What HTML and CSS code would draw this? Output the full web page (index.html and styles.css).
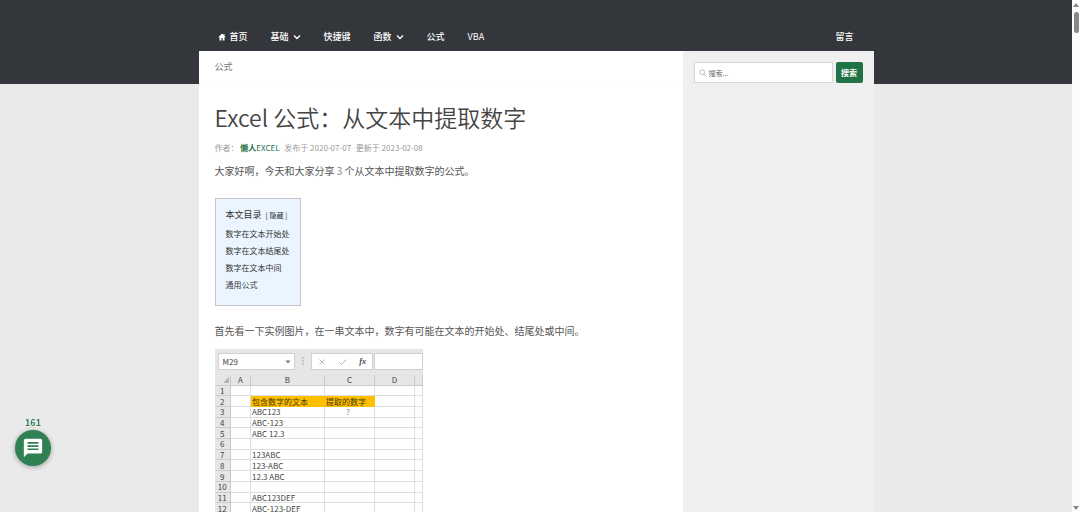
FILE: index.html
```html
<!DOCTYPE html>
<html lang="zh-CN">
<head>
<meta charset="utf-8">
<title>Excel 公式：从文本中提取数字</title>
<link rel="stylesheet" href="styles.css">
</head>
<body>
<div class="page">
  <div class="container">
    <nav class="nav">
      <a href="#"><svg class="home" viewBox="0 0 16 16"><path d="M8 1 0.5 8.500H3V15h3.800V10h2.400v5H13V8.500h2.500L13 6V2h-2v2z" fill="currentColor"/></svg>首页</a>
      <a href="#">基础<svg class="chev" viewBox="0 0 8 8"><path d="M1 2.500 4 5.500 7 2.500" fill="none" stroke="currentColor" stroke-width="1.400"/></svg></a>
      <a href="#">快捷键</a>
      <a href="#">函数<svg class="chev" viewBox="0 0 8 8"><path d="M1 2.500 4 5.500 7 2.500" fill="none" stroke="currentColor" stroke-width="1.400"/></svg></a>
      <a href="#">公式</a>
      <a href="#" class="latin">VBA</a>
      <a href="#" class="last">留言</a>
    </nav>
    <div class="columns">
      <main class="main">
        <div class="crumb">公式</div>
        <article class="post">
          <h1>Excel 公式：从文本中提取数字</h1>
          <p class="meta">作者： <a href="#"><b>懒人</b>EXCEL</a><span class="dot">·</span>发布于 2020-07-07<span class="dot">·</span>更新于 2023-02-08</p>
          <p class="text">大家好啊，今天和大家分享 <span class="num">3</span> 个从文本中提取数字的公式。</p>
          <div class="toc">
            <div class="toc-title">本文目录 <span>[ <a href="#">隐藏</a> ]</span></div>
            <ul>
              <li><a href="#">数字在文本开始处</a></li>
              <li><a href="#">数字在文本结尾处</a></li>
              <li><a href="#">数字在文本中间</a></li>
              <li><a href="#">通用公式</a></li>
            </ul>
          </div>
          <p class="text">首先看一下实例图片，在一串文本中，数字有可能在文本的开始处、结尾处或中间。</p>
          <div class="sheet">
            <div class="bar">
              <div class="cellname">M29<svg viewBox="0 0 6 4"><path d="M0.500 0.500h5L3 3.500z" fill="#777"/></svg></div>
              <svg class="grip" viewBox="0 0 4 10"><path d="M2 1v2M2 4v2M2 7v2" stroke="#aaa"/></svg>
              <div class="tools">
                <svg viewBox="0 0 10 10"><path d="M2.500 2.500l5 5M7.500 2.500l-5 5" stroke="#b5b5b5" fill="none"/></svg>
                <svg viewBox="0 0 10 10"><path d="M1.500 5.500l2 2 5-5" stroke="#b5b5b5" fill="none"/></svg>
                <span class="fx">fx</span>
              </div>
              <div class="formula"></div>
            </div>
            <table>
              <colgroup><col class="c0"><col class="ca"><col class="cb"><col class="cc"><col class="cd"><col class="ce"></colgroup>
              <tr class="head"><th><svg class="corner" viewBox="0 0 8 8"><path d="M7 1v6H1z" fill="#b4b4b4"/></svg></th><th>A</th><th>B</th><th>C</th><th>D</th><th></th></tr>
              <tr><th>1</th><td></td><td></td><td></td><td></td><td></td></tr>
              <tr><th>2</th><td></td><td class="hl">包含数字的文本</td><td class="hl">提取的数字</td><td></td><td></td></tr>
              <tr><th>3</th><td></td><td>ABC123</td><td class="q">?</td><td></td><td></td></tr>
              <tr><th>4</th><td></td><td>ABC-123</td><td></td><td></td><td></td></tr>
              <tr><th>5</th><td></td><td>ABC 12.3</td><td></td><td></td><td></td></tr>
              <tr><th>6</th><td></td><td></td><td></td><td></td><td></td></tr>
              <tr><th>7</th><td></td><td>123ABC</td><td></td><td></td><td></td></tr>
              <tr><th>8</th><td></td><td>123-ABC</td><td></td><td></td><td></td></tr>
              <tr><th>9</th><td></td><td>12.3 ABC</td><td></td><td></td><td></td></tr>
              <tr><th>10</th><td></td><td></td><td></td><td></td><td></td></tr>
              <tr><th>11</th><td></td><td>ABC123DEF</td><td></td><td></td><td></td></tr>
              <tr><th>12</th><td></td><td>ABC-123-DEF</td><td></td><td></td><td></td></tr>
            </table>
          </div>
        </article>
      </main>
      <aside class="side">
        <form class="search">
          <label class="field" for="q"><svg viewBox="0 0 10 10"><circle cx="4" cy="4" r="3" fill="none" stroke="#aaa"/><path d="M6.200 6.200 9.200 9.200" stroke="#aaa"/></svg>
          <input id="q" type="text" placeholder="搜索..." aria-label="搜索"></label>
          <button type="button">搜索</button>
        </form>
      </aside>
    </div>
  </div>
</div>
<div class="scrollbar"><svg viewBox="0 0 8 6"><path d="M4 1 7 5H1z" fill="#858585"/></svg><span class="thumb"></span><svg class="down" viewBox="0 0 8 6"><path d="M4 5 7 1H1z" fill="#858585"/></svg></div>
<div class="comments">
  <span>161</span>
  <button type="button" aria-label="评论"><svg viewBox="0 0 24 24"><path fill="#fff" fill-rule="evenodd" d="M4 2h16a2 2 0 0 1 2 2v12a2 2 0 0 1-2 2H6l-4 4V4a2 2 0 0 1 2-2zM6 5.500v1.800h12V5.500zM6 9v1.800h12V9zM6 12.500v1.800h12v-1.800z"/></svg></button>
</div>
</body>
</html>
```
FILE: styles.css
```css
* { box-sizing: border-box; }
body {
  margin: 0;
  height: 100vh;
  display: flex;
  overflow: hidden;
  background: #eaeaea;
  color: #555;
  font-family: "Noto Sans CJK SC", sans-serif;
  font-size: 10px;
}
a { color: inherit; text-decoration: none; }
h1, p, ul { margin: 0; padding: 0; }
button { border: 0; padding: 0; font-family: inherit; cursor: pointer; }

.page {
  flex: 1;
  background: linear-gradient(#33363b 84px, #eaeaea 84px);
}
.container { max-width: 675px; margin: 0 auto; padding-top: 22px; }

.nav {
  display: flex;
  align-items: center;
  gap: 23px;
  height: 29px;
  padding: 0 20px 0 19px;
  color: #fff;
  font-size: 9px;
  font-weight: 500;
}
.nav a { display: flex; align-items: center; }
.nav .last { margin-left: auto; }
.nav .latin { font-weight: 400; }
.home { width: 8px; height: 8px; margin-right: 4px; }
.chev { width: 8px; height: 8px; margin-left: 4px; }

.columns { display: flex; align-items: stretch; }
.main { flex: 1; min-width: 0; background: #fff; }
.side { width: 191px; padding: 11px; background: #f0f0f0; }
.crumb {
  height: 34px;
  padding: 0 16px;
  line-height: 32px;
  border-bottom: 1px solid #fafafa;
  font-size: 9px;
  color: #777;
}
.post { padding: 14px 16px 0; }
h1 { font-size: 23px; font-weight: 350; line-height: 36px; color: #444; }
.meta { margin-top: 5px; font-size: 8px; line-height: 16px; color: #999; }
.meta a { color: #217346; }
.meta b { font-weight: 700; }
.dot { margin: 0 1px; color: #ccc; font-family: "Liberation Sans", sans-serif; }
.text { margin-top: 4px; line-height: 20px; }
.num { color: #888; }

.toc {
  width: max-content;
  margin: 17px 0 15px;
  padding: 6px 10px 12px;
  border: 1px solid #c2c6cb;
  background: #ebf5ff;
  color: #333;
}
.toc-title { font-size: 9px; line-height: 19px; }
.toc-title span { font-size: 7px; margin-left: 2px; }
.toc ul { list-style: none; font-size: 8px; line-height: 17px; }

.sheet { width: 208px; margin-top: 8px; background: #e6e6e6; overflow: hidden; color: #444; }
.bar { display: flex; height: 26px; padding: 4px 0 5px 3px; }
.bar > div { background: #fff; border: 1px solid #d0d0d0; }
.cellname {
  width: 77px;
  display: flex;
  align-items: center;
  justify-content: space-between;
  padding: 0 3px 0 4px;
  font-size: 8px;
}
.cellname svg { width: 6px; height: 4px; }
.grip { width: 4px; height: 10px; margin: 3px 6px; }
.tools { width: 62px; display: flex; align-items: center; justify-content: space-around; }
.tools svg { width: 10px; height: 10px; }
.fx { font: italic bold 8px "Liberation Serif", serif; }
.formula { flex: 1; margin-left: 1px; }

.sheet table { width: 208px; height: 139px; table-layout: fixed; border-collapse: collapse; background: #fff; }
.c0 { width: 16px; }
.ca { width: 20px; }
.cb { width: 74px; }
.cc { width: 50px; }
.cd { width: 40px; }
.sheet th, .sheet td {
  padding: 0 0 0 1px;
  border-right: 1px solid #dedede;
  border-bottom: 1px solid #dedede;
  font-size: 8px;
  line-height: 9px;
  font-weight: 400;
  white-space: nowrap;
}
.sheet th { padding: 0; background: #e6e6e6; border-color: #cacaca; text-align: center; }
.sheet .hl { background: #ffc000; border-color: #ffc000; color: #44380c; }
.sheet .q { text-align: center; padding-right: 4px; color: #888; }
.corner { display: block; width: 8px; height: 8px; margin-left: auto; }

.search { display: flex; gap: 3px; height: 21px; }
.field {
  flex: 1;
  min-width: 0;
  display: flex;
  align-items: center;
  gap: 2px;
  padding: 0 4px;
  background: #fff;
  border: 1px solid #d8d8d8;
}
.field svg { width: 8px; height: 8px; flex: none; }
.field input { width: 100%; border: 0; padding: 0; outline: 0; background: none; font: 7px "Noto Sans CJK SC", sans-serif; }
.field input::placeholder { color: #666; }
.search button { width: 27px; border-radius: 2px; background: #217346; color: #fff; font-size: 8px; font-weight: 700; }

.scrollbar { width: 8px; padding-top: 2px; display: flex; flex-direction: column; align-items: center; background: #fcfcfc; }
.scrollbar svg { width: 8px; height: 6px; }
.scrollbar .down { margin: auto 0 1px; }
.thumb { width: 5px; height: 21px; margin-top: 4px; border-radius: 3px; background: #888; }

.comments {
  position: fixed;
  left: 15px;
  bottom: 46px;
  display: flex;
  flex-direction: column;
  align-items: center;
  color: #388259;
  font-size: 9px;
  font-weight: 700;
  line-height: 14px;
}
.comments button {
  display: flex;
  align-items: center;
  justify-content: center;
  width: 36px;
  height: 36px;
  border-radius: 50%;
  background: #2f8053;
  box-shadow: 0 1px 5px rgba(0, 0, 0, 0.35);
}
.comments svg { width: 22px; height: 22px; }
```
